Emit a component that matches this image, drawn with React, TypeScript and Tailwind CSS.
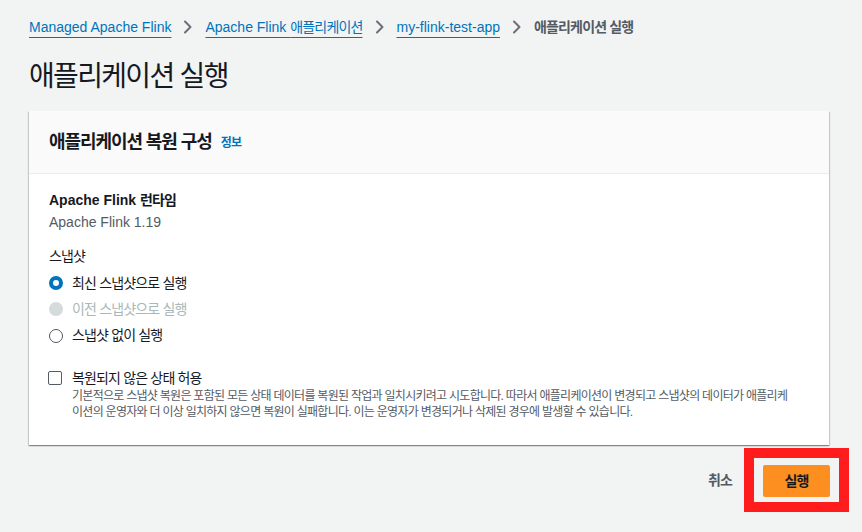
import React from "react";

const K = "tracking-[-0.06em]";

function Chevron() {
  return (
    <svg width="10" height="14" viewBox="0 0 10 14" className="shrink-0">
      <path d="M2 1.5 L7.5 7 L2 12.5" fill="none" stroke="#687078" strokeWidth="2" strokeLinecap="round" strokeLinejoin="round" />
    </svg>
  );
}

function Radio({ state }: { state: "on" | "off" | "disabled" }) {
  if (state === "on")
    return <span className="w-[14px] h-[14px] rounded-full border-[4px] border-[#0073bb] bg-white shrink-0" />;
  if (state === "disabled")
    return <span className="w-[14px] h-[14px] rounded-full bg-[#d5dbdb] shrink-0" />;
  return <span className="w-[14px] h-[14px] rounded-full border-[1.5px] border-[#545b64] bg-white shrink-0" />;
}

export default function App() {
  return (
    <div className="w-[862px] h-[532px] bg-[#f2f3f3] font-['Liberation_Sans','Noto_Sans_CJK_KR',sans-serif] text-[#16191f] text-[14px] pl-[29px] pr-[33px] overflow-hidden">
      {/* breadcrumbs */}
      <div className="flex items-center h-[20px] mt-[17px] gap-[12px] leading-[20px]">
        <span className="text-[#0073bb] underline underline-offset-[5px] decoration-[1px]">Managed Apache Flink</span>
        <Chevron />
        <span className="text-[#0073bb] underline underline-offset-[5px] decoration-[1px]">
          Apache Flink <span className={K}>애플리케이션</span>
        </span>
        <Chevron />
        <span className="text-[#0073bb] underline underline-offset-[5px] decoration-[1px]">my-flink-test-app</span>
        <Chevron />
        <span className={`text-[#545b64] font-bold ${K}`}>애플리케이션 실행</span>
      </div>

      {/* title */}
      <h1 className={`text-[28px] leading-[36px] mt-[22px] font-normal ${K}`}>애플리케이션 실행</h1>

      {/* card */}
      <div className="mt-[16px] bg-white shadow-[0_1px_1px_0_rgba(0,28,36,0.3),1px_1px_1px_0_rgba(0,28,36,0.15),-1px_1px_1px_0_rgba(0,28,36,0.15)]">
        <div className="h-[63px] bg-[#fafafa] border-b border-[#eaeded] flex items-center px-[20px] gap-[9px]">
          <span className={`text-[18px] font-bold ${K}`}>애플리케이션 복원 구성</span>
          <span className={`text-[12px] font-bold text-[#0073bb] mt-[2px] ${K}`}>정보</span>
        </div>
        <div className="px-[20px] pt-[15px] pb-[25px]">
          <div className="font-bold leading-[22px]">
            Apache Flink <span className={K}>런타임</span>
          </div>
          <div className="leading-[22px] text-[#545b64]">Apache Flink 1.19</div>

          <div className={`leading-[22px] mt-[12px] ${K}`}>스냅샷</div>
          <div className="mt-[3px] flex flex-col">
            <div className="h-[26px] flex items-center gap-[9px]">
              <Radio state="on" />
              <span className={K}>최신 스냅샷으로 실행</span>
            </div>
            <div className="h-[26px] flex items-center gap-[9px]">
              <Radio state="disabled" />
              <span className={`text-[#aab7b8] ${K}`}>이전 스냅샷으로 실행</span>
            </div>
            <div className="h-[27px] flex items-center gap-[9px]">
              <Radio state="off" />
              <span className={K}>스냅샷 없이 실행</span>
            </div>
          </div>

          <div className="mt-[19px] flex gap-[10px]">
            <span className="w-[14px] h-[14px] mt-[3px] ml-[-1px] border border-[#545b64] rounded-[2px] bg-white shrink-0" />
            <div className="flex flex-col">
              <span className={`leading-[20px] ${K}`}>복원되지 않은 상태 허용</span>
              <span className={`text-[12px] leading-[16px] text-[#545b64] whitespace-nowrap ${K}`}>
                기본적으로 스냅샷 복원은 포함된 모든 상태 데이터를 복원된 작업과 일치시키려고 시도합니다. 따라서 애플리케이션이 변경되고 스냅샷의 데이터가 애플리케
                <br />
                이션의 운영자와 더 이상 일치하지 않으면 복원이 실패합니다. 이는 운영자가 변경되거나 삭제된 경우에 발생할 수 있습니다.
              </span>
            </div>
          </div>
        </div>
      </div>

      {/* footer */}
      <div className="flex justify-end items-center mt-[3px] mr-[-20px]">
        <span className={`font-bold text-[#545b64] mr-[12px] ${K}`}>취소</span>
        <div className="border-[10px] border-[#fe1c1c] pl-[9px] pr-[9px] pt-[7px] pb-[5px]">
          <div className="w-[67px] h-[32px] rounded-[2px] bg-[#fd8f20] flex items-center justify-center">
            <span className={`font-bold text-[#16191f] ${K}`}>실행</span>
          </div>
        </div>
      </div>
    </div>
  );
}
